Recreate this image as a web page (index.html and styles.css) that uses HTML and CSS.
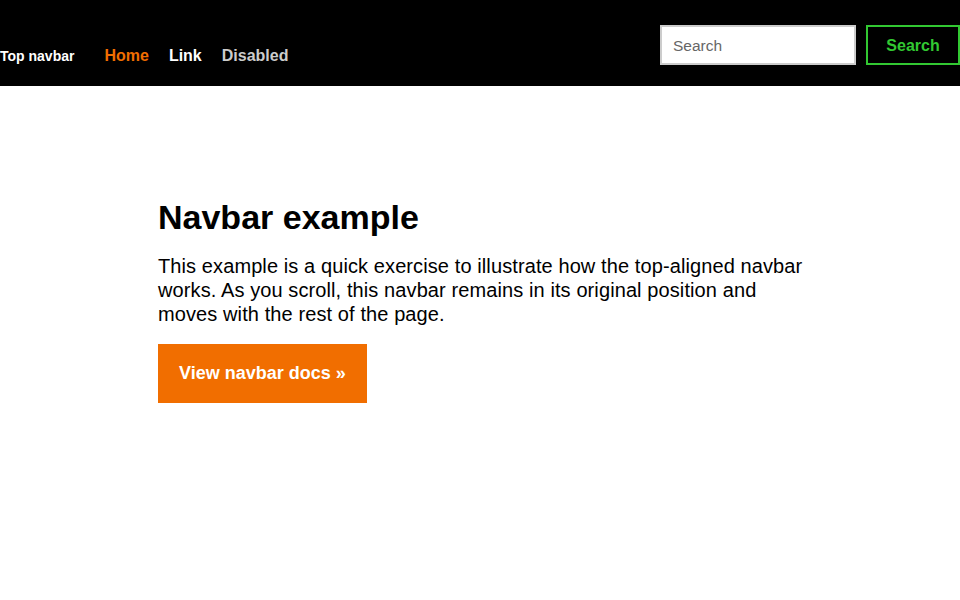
FILE: index.html
```html
<!DOCTYPE html>
<html lang="en">
<head>
<meta charset="utf-8">
<title>Top navbar example</title>
<link rel="stylesheet" href="styles.css">
</head>
<body>
<nav class="navbar">
  <div class="nav-left">
    <a class="brand" href="#">Top navbar</a>
    <ul class="nav-links">
      <li><a class="nav-link active" href="#">Home</a></li>
      <li><a class="nav-link" href="#">Link</a></li>
      <li><a class="nav-link disabled" href="#">Disabled</a></li>
    </ul>
  </div>
  <form class="search-form">
    <input class="search-input" type="search" placeholder="Search" aria-label="Search">
    <button class="search-btn" type="submit">Search</button>
  </form>
</nav>
<main class="container">
  <h1 class="title">Navbar example</h1>
  <p class="lead">This example is a quick exercise to illustrate how the top-aligned navbar works. As you scroll, this navbar remains in its original position and moves with the rest of the page.</p>
  <a class="btn-primary" href="#">View navbar docs &raquo;</a>
</main>
</body>
</html>
```
FILE: styles.css
```css
* { box-sizing: border-box; }
html, body { margin: 0; padding: 0; }
body {
  font-family: "Liberation Sans", Arial, Helvetica, sans-serif;
  color: #000;
  background: #fff;
}
a { text-decoration: none; }

.navbar {
  background: #000;
  height: 86px;
  display: flex;
  justify-content: space-between;
  align-items: flex-start;
}
.nav-left {
  display: flex;
  align-items: baseline;
  align-self: flex-end;
  padding-bottom: 20px;
}
.brand {
  color: #fff;
  font-weight: 700;
  font-size: 14px;
  line-height: 18px;
  margin-right: 20px;
}
.nav-links {
  display: flex;
  list-style: none;
  margin: 0;
  padding: 0;
}
.nav-link {
  display: block;
  color: #fff;
  font-weight: 700;
  font-size: 16px;
  line-height: 20px;
  padding: 0 10px;
}
.nav-link.active { color: #f16e00; }
.nav-link.disabled { color: #ccc; }

.search-form {
  display: flex;
  gap: 10px;
  margin-top: 25px;
}
.search-input {
  width: 196px;
  height: 40px;
  border: 2px solid #ccc;
  background: #fff;
  padding: 2px 11px 0;
  font-family: "Liberation Sans", Arial, sans-serif;
  font-size: 15.5px;
  color: #000;
  outline: none;
}
.search-input::placeholder { color: #666; }
.search-btn {
  width: 94px;
  height: 40px;
  border: 2px solid #32c832;
  background: #000;
  color: #32c832;
  font-family: "Liberation Sans", Arial, sans-serif;
  font-weight: 700;
  font-size: 16px;
  padding: 2px 0 0;
}

.container {
  width: 660px;
  margin-left: 158px;
  padding-top: 112px;
}
.title {
  margin: 0 0 18px;
  font-size: 34px;
  line-height: 38px;
  font-weight: 700;
}
.lead {
  margin: 0 0 18px;
  font-size: 20px;
  line-height: 24px;
  letter-spacing: 0.1px;
}
.btn-primary {
  display: inline-block;
  white-space: nowrap;
  background: #f16e00;
  color: #fff;
  font-weight: 700;
  font-size: 18px;
  line-height: 21px;
  padding: 19px 21px;
}
```
